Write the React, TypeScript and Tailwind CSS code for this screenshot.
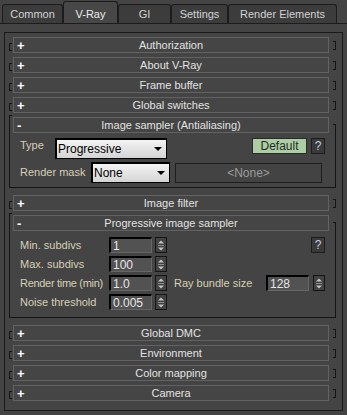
import React from 'react';

const edge = 'border-[#151515]';

function Plus({ open }: { open?: boolean }) {
  return (
    <span className="w-[12px] pl-[3px] text-[13px] font-bold leading-none text-white">
      {open ? '-' : '+'}
    </span>
  );
}

function Bar({ title, open }: { title: string; open?: boolean }) {
  return (
    <div className="ml-[1px] flex h-[16px] w-[316px] items-center border border-[#626262] bg-[#454545]">
      <Plus open={open} />
      <span className="flex-1 text-center leading-none text-[#e2e2e2]">{title}</span>
      <span className="w-[12px]" />
    </div>
  );
}

function Rollout({ title, className = '' }: { title: string; className?: string }) {
  return (
    <div className={`flex h-[16px] items-start pl-[4px] ${className}`}>
      <span className={`mt-[6px] h-[8px] w-[3px] border border-r-0 ${edge}`} />
      <Bar title={title} />
      <span className={`ml-[4px] mt-[4px] h-[9px] w-[3px] border border-l-0 ${edge}`} />
    </div>
  );
}

function OpenRollout({
  title,
  className = '',
  children,
}: {
  title: string;
  className?: string;
  children: React.ReactNode;
}) {
  return (
    <div className={`flex flex-col ${className}`}>
      <div className="flex h-[16px] items-start pl-[4px]">
        <span className={`-mt-[2px] h-[18px] w-[3px] border-l border-t ${edge}`} />
        <Bar title={title} open />
        <span className={`ml-[4px] mt-[7px] h-[9px] w-[3px] border-r border-t ${edge}`} />
      </div>
      <div className={`ml-[4px] w-[327px] border-x border-b ${edge}`}>{children}</div>
    </div>
  );
}

function Dropdown({ value, w }: { value: string; w: string }) {
  return (
    <div
      className={`flex h-[21px] ${w} items-center justify-between border-b border-l-2 border-r border-t-2 border-black bg-linear-to-b from-[#f4f4f4] to-[#d4d4d4] pl-[1px] pr-[3px] text-[12px] text-black`}
    >
      <span>{value}</span>
      <svg width="9" height="5" viewBox="0 0 9 5">
        <polygon points="0,0 8,0 4,4" fill="#000" />
      </svg>
    </div>
  );
}

function Num({ value }: { value: string }) {
  return (
    <div className="flex h-[16px] w-[43px] items-center border-b border-l-2 border-r border-t-2 border-b-[#666] border-l-black border-r-[#666] border-t-black bg-[#525252] pl-[2px] text-[12px] text-[#e6e6e6]">
      {value}
    </div>
  );
}

function Spinner({ className = '' }: { className?: string }) {
  return (
    <svg width="12" height="16" viewBox="0 0 12 16" className={className}>
      <rect x="0.5" y="0.5" width="11" height="15" fill="#424242" stroke="#161616" />
      <polygon points="3,6.5 6,3.5 9,6.5" fill="#c4c4c4" />
      <line x1="3" y1="8.5" x2="9" y2="8.5" stroke="#8a8a8a" />
      <polygon points="3,10.5 9,10.5 6,13.5" fill="#c4c4c4" />
    </svg>
  );
}

function Help({ className = '' }: { className?: string }) {
  return (
    <div
      className={`flex h-[16px] w-[14px] items-center justify-center border border-[#1c1c1c] bg-[#3a3a3a] text-[12px] text-[#c8cce0] ${className}`}
    >
      ?
    </div>
  );
}

function Tab({ label, w, active }: { label: string; w: string; active?: boolean }) {
  return (
    <div
      className={`flex ${w} items-center justify-center rounded-t-[3px] border-x border-t border-[#1c1c1c] ${
        active ? 'h-[22px] bg-[#474747] pt-[3px] text-[#ececec]' : 'h-[19px] bg-[#3c3c3c] text-[#d2d2d2]'
      }`}
    >
      {label}
    </div>
  );
}

const label = 'text-[#d8cfb4] leading-[13px]';

export default function App() {
  return (
    <div className="h-[415px] w-[347px] overflow-hidden bg-[#444] font-['Liberation_Sans',Arial,sans-serif] text-[11px]">
      <div className="flex h-[24px] items-end border-b border-[#1c1c1c] pl-[2px]">
        <Tab label="Common" w="w-[61px]" />
        <Tab label="V-Ray" w="w-[55px]" active />
        <Tab label="GI" w="w-[53px]" />
        <Tab label="Settings" w="w-[57px]" />
        <Tab label="Render Elements" w="w-[109px]" />
      </div>

      <div className="ml-[4px] mt-[8px] h-[379px] w-[339px] border border-[#1a1a1a] pt-[4px]">
        <Rollout title="Authorization" />
        <Rollout title="About V-Ray" className="mt-[4px]" />
        <Rollout title="Frame buffer" className="mt-[4px]" />
        <Rollout title="Global switches" className="mt-[4px]" />

        <OpenRollout title="Image sampler (Antialiasing)" className="mt-[4px]">
          <div className="pb-[4px] pt-[5px]">
            <div className="flex h-[21px] items-start">
              <span className={`ml-[10px] mt-[1px] w-[35px] ${label}`}>Type</span>
              <Dropdown value="Progressive" w="w-[112px]" />
              <div className="ml-[85px] flex h-[16px] w-[55px] items-center justify-center border border-[#2a2a2a] bg-[#abcea2] text-[12px] text-[#2a2a2a]">
                Default
              </div>
              <Help className="ml-[4px]" />
            </div>
            <div className="mt-[3px] flex h-[21px] items-center">
              <span className={`ml-[10px] w-[71px] ${label}`}>Render mask</span>
              <Dropdown value="None" w="w-[79px]" />
              <div className="ml-[5px] flex h-[20px] w-[147px] items-center justify-center border border-[#1e1e1e] bg-[#434343] text-[12px] text-[#9c9c9c]">
                &lt;None&gt;
              </div>
            </div>
          </div>
        </OpenRollout>

        <Rollout title="Image filter" className="mt-[7px]" />

        <OpenRollout title="Progressive image sampler" className="mt-[4px]">
          <div className="flex flex-col gap-[3px] pb-[7px] pt-[6px]">
            <div className="flex h-[16px] items-center">
              <span className={`ml-[10px] w-[89px] ${label}`}>Min. subdivs</span>
              <Num value="1" />
              <Spinner className="ml-[3px]" />
              <Help className="ml-[144px]" />
            </div>
            <div className="flex h-[16px] items-center">
              <span className={`ml-[10px] w-[89px] ${label}`}>Max. subdivs</span>
              <Num value="100" />
              <Spinner className="ml-[3px]" />
            </div>
            <div className="flex h-[16px] items-center">
              <span className={`ml-[10px] w-[89px] whitespace-nowrap tracking-[-0.3px] ${label}`}>
                Render time (min)
              </span>
              <Num value="1.0" />
              <Spinner className="ml-[3px]" />
              <span className={`ml-[7px] w-[92px] ${label}`}>Ray bundle size</span>
              <Num value="128" />
              <Spinner className="ml-[4px]" />
            </div>
            <div className="flex h-[16px] items-center">
              <span className={`ml-[10px] w-[89px] ${label}`}>Noise threshold</span>
              <Num value="0.005" />
              <Spinner className="ml-[3px]" />
            </div>
          </div>
        </OpenRollout>

        <Rollout title="Global DMC" className="mt-[7px]" />
        <Rollout title="Environment" className="mt-[4px]" />
        <Rollout title="Color mapping" className="mt-[4px]" />
        <Rollout title="Camera" className="mt-[4px]" />
      </div>
    </div>
  );
}
